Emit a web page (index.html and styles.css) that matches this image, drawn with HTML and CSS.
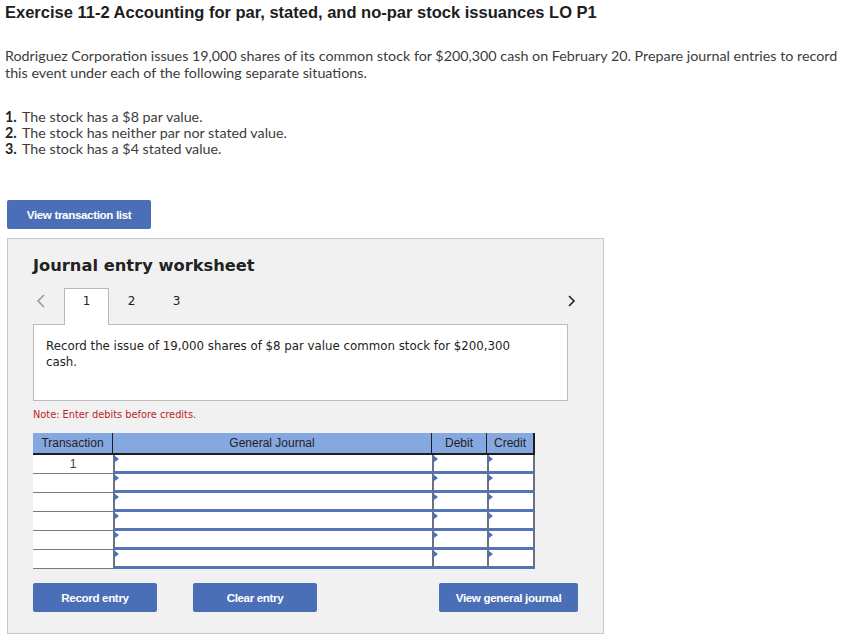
FILE: index.html
```html
<!DOCTYPE html>
<html lang="en">
<head>
<meta charset="utf-8">
<title>Exercise 11-2</title>
<link rel="stylesheet" href="styles.css">
</head>
<body>
<main class="page">
  <h1 class="title">Exercise 11-2 Accounting for par, stated, and no-par stock issuances LO P1</h1>
  <p class="intro">Rodriguez Corporation issues 19,000 shares of its common stock for $200,300 cash on February 20. Prepare journal entries to record this event under each of the following separate situations.</p>
  <ol class="parts">
    <li><span class="num">1.</span><span>The stock has a $8 par value.</span></li>
    <li><span class="num">2.</span><span>The stock has neither par nor stated value.</span></li>
    <li><span class="num">3.</span><span>The stock has a $4 stated value.</span></li>
  </ol>
  <button class="btn btn-list">View transaction list</button>

  <section class="worksheet">
    <h2 class="ws-title">Journal entry worksheet</h2>
    <div class="tabs">
      <span class="arrow prev"><svg width="10" height="14" viewBox="0 0 10 14"><polyline points="8,1 2,7 8,13" fill="none" stroke="#9a9a9a" stroke-width="1.6"/></svg></span>
      <span class="tab active">1</span>
      <span class="tab">2</span>
      <span class="tab">3</span>
      <span class="arrow next"><svg width="10" height="14" viewBox="0 0 10 14"><polyline points="2,2 7,7 2,12" fill="none" stroke="#222" stroke-width="1.6"/></svg></span>
    </div>
    <div class="desc">Record the issue of 19,000 shares of $8 par value common stock for $200,300 cash.</div>
    <p class="note">Note: Enter debits before credits.</p>

    <div class="journal">
      <div class="hd">Transaction</div>
      <div class="hd">General Journal</div>
      <div class="hd">Debit</div>
      <div class="hd">Credit</div>

      <div class="tx">1</div><div class="fld"></div><div class="fld"></div><div class="fld last"></div>
      <div class="tx"></div><div class="fld"></div><div class="fld"></div><div class="fld last"></div>
      <div class="tx"></div><div class="fld"></div><div class="fld"></div><div class="fld last"></div>
      <div class="tx"></div><div class="fld"></div><div class="fld"></div><div class="fld last"></div>
      <div class="tx"></div><div class="fld"></div><div class="fld"></div><div class="fld last"></div>
      <div class="tx"></div><div class="fld"></div><div class="fld"></div><div class="fld last"></div>
    </div>

    <div class="actions">
      <button class="btn btn-act">Record entry</button>
      <button class="btn btn-act">Clear entry</button>
      <button class="btn btn-gj">View general journal</button>
    </div>
  </section>
</main>
</body>
</html>
```

FILE: styles.css
```css
* { box-sizing: border-box; }
html, body { margin: 0; padding: 0; background: #fff; }
body { font-family: "Lato", "Liberation Sans", sans-serif; color: #333; }

.page { padding: 2px 0 0 0; }

.title {
  margin: 0 0 0 5px;
  font-family: "Liberation Sans", Arial, sans-serif;
  font-size: 16.5px;
  line-height: 20px;
  font-weight: bold;
  color: #1d1d1d;
}

.intro {
  margin: 25px 0 0 5px;
  font-size: 14.3px;
  line-height: 17px;
  color: #3c3c3c;
  width: 845px;
}

.parts {
  list-style: none;
  margin: 28px 0 0 0;
  padding: 0;
  font-size: 14.3px;
  line-height: 16px;
  color: #3c3c3c;
}
.parts li { display: flex; }
.parts .num {
  width: 18px;
  padding-left: 5px;
  font-weight: bold;
  color: #222;
  margin-right: 4px;
}

.btn {
  display: block;
  border: none;
  border-radius: 2px;
  background: #4a6fb6;
  color: #fff;
  font-family: "Liberation Sans", Arial, sans-serif;
  font-weight: bold;
  font-size: 11.6px;
  letter-spacing: -0.35px;
  height: 29px;
  padding: 0;
  text-align: center;
}
.btn-list { margin: 43px 0 0 7px; width: 144px; }

.worksheet {
  margin: 9px 0 0 7px;
  width: 597px;
  height: 396px;
  background: #f1f1f1;
  border: 1px solid #c8c8c8;
  padding: 17px 25px 0 25px;
}

.ws-title {
  margin: 0;
  font-family: "DejaVu Sans", Verdana, sans-serif;
  font-size: 16.3px;
  line-height: 20px;
  font-weight: bold;
  color: #222;
}

.tabs {
  display: flex;
  align-items: flex-start;
  margin-top: 12px;
  height: 36px;
  font-family: "DejaVu Sans", Verdana, sans-serif;
  font-size: 12px;
  color: #222;
}
.arrow { display: flex; align-items: center; height: 26px; }
.prev { width: 31px; padding-left: 3px; }
.next { margin-left: auto; margin-right: 1px; }
.tab {
  width: 45px;
  height: 26px;
  line-height: 27px;
  text-align: center;
}
.tab.active {
  position: relative;
  z-index: 1;
  height: 37px;
  background: #fff;
  border: 1px solid #b8b8b8;
  border-bottom: none;
  line-height: 25px;
}

.desc {
  width: 535px;
  height: 77px;
  background: #fff;
  border: 1px solid #bcbcbc;
  padding: 13px 40px 0 12px;
  font-family: "DejaVu Sans", Verdana, sans-serif;
  font-size: 11.8px;
  line-height: 16px;
  color: #222;
}

.note {
  margin: 7px 0 0 0;
  font-family: "DejaVu Sans", Verdana, sans-serif;
  font-size: 9.8px;
  line-height: 14px;
  color: #b8242a;
}

.journal {
  margin-top: 11px;
  display: grid;
  grid-template-columns: 80px 319px 55px 48px;
  grid-template-rows: 22px repeat(6, 19px);
  width: 502px;
  font-family: "Liberation Sans", Arial, sans-serif;
  font-size: 12px;
  color: #222;
}
.journal .hd {
  background: #86a8e1;
  border-right: 1px solid #1e1e1e;
  border-bottom: 2px solid #1e1e1e;
  text-align: center;
  line-height: 21px;
}
.journal .hd:nth-child(4) { border-right-width: 2px; }

.tx {
  background: #fff;
  border-bottom: 1px solid #7a7a7a;
  text-align: center;
  line-height: 18px;
  color: #444;
}
.fld {
  position: relative;
  background: #fff;
  border-left: 2px solid #6a7282;
  border-bottom: 3px solid #5574b6;
}
.fld.last { border-right: 2px solid #6a7282; }
.fld::before {
  content: "";
  position: absolute;
  left: 0;
  top: 1px;
  border-left: 4px solid #3f6fd1;
  border-top: 3px solid transparent;
  border-bottom: 3px solid transparent;
}

.actions {
  display: flex;
  margin-top: 14px;
}
.btn-act { width: 124px; margin-right: 36px; }
.btn-gj { width: 139px; margin-left: auto; }
```
